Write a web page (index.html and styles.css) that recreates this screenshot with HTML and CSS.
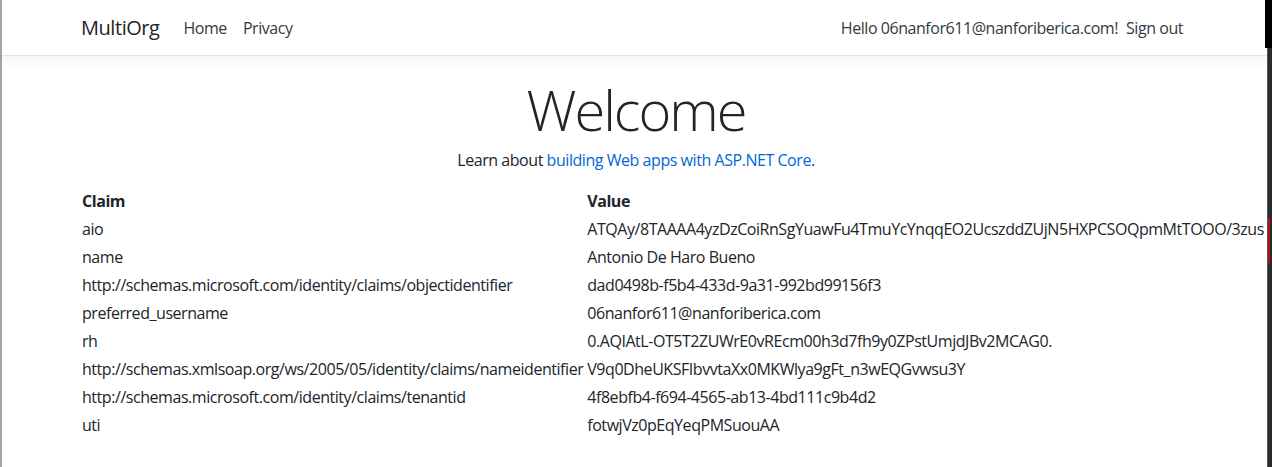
FILE: index.html
```html
<!DOCTYPE html>
<html lang="en">
<head>
<meta charset="utf-8">
<title>Home Page - MultiOrg</title>
<link rel="stylesheet" href="styles.css">
</head>
<body>
<header class="navbar">
  <div class="container nav-inner">
    <div class="nav-left">
      <a class="brand" href="#">MultiOrg</a>
      <a class="nav-link" href="#">Home</a>
      <a class="nav-link" href="#">Privacy</a>
    </div>
    <div class="nav-right">
      <span class="nav-text">Hello 06nanfor611@nanforiberica.com!</span>
      <a class="nav-link" href="#">Sign out</a>
    </div>
  </div>
</header>
<main class="container main">
  <div class="hero">
    <h1 class="display">Welcome</h1>
    <p class="lead-p">Learn about <a class="link" href="#">building Web apps with ASP.NET Core</a>.</p>
  </div>
  <table class="claims">
    <thead>
      <tr><th>Claim</th><th>Value</th></tr>
    </thead>
    <tbody>
      <tr><td>aio</td><td>ATQAy/8TAAAA4yzDzCoiRnSgYuawFu4TmuYcYnqqEO2UcszddZUjN5HXPCSOQpmMtTOOO/3zus</td></tr>
      <tr><td>name</td><td>Antonio De Haro Bueno</td></tr>
      <tr><td>http://schemas.microsoft.com/identity/claims/objectidentifier</td><td>dad0498b-f5b4-433d-9a31-992bd99156f3</td></tr>
      <tr><td>preferred_username</td><td>06nanfor611@nanforiberica.com</td></tr>
      <tr><td>rh</td><td>0.AQIAtL-OT5T2ZUWrE0vREcm00h3d7fh9y0ZPstUmjdJBv2MCAG0.</td></tr>
      <tr><td>http://schemas.xmlsoap.org/ws/2005/05/identity/claims/nameidentifier</td><td>V9q0DheUKSFIbvvtaXx0MKWlya9gFt_n3wEQGvwsu3Y</td></tr>
      <tr><td>http://schemas.microsoft.com/identity/claims/tenantid</td><td>4f8ebfb4-f694-4565-ab13-4bd111c9b4d2</td></tr>
      <tr><td>uti</td><td>fotwjVz0pEqYeqPMSuouAA</td></tr>
    </tbody>
  </table>
</main>
<div class="frame-left"></div>
<div class="frame-right-top"></div>
<div class="frame-right"><div class="frame-red"></div></div>
</body>
</html>
```
FILE: styles.css
```css
html, body {
  margin: 0;
  padding: 0;
}
body {
  font-family: "Open Sans", "Noto Sans", sans-serif;
  font-size: 16px;
  line-height: 1.5;
  letter-spacing: -0.45px;
  color: #212529;
  background: #fff;
  overflow: hidden;
  height: 467px;
}
.container {
  max-width: 1140px;
  margin: 0 auto;
  padding: 0 15px;
  box-sizing: border-box;
}
.navbar {
  padding: 8px 0 7px;
  border-bottom: 1px solid #e5e5e5;
  box-shadow: 0 4px 12px rgba(0,0,0,.05);
  background: #fff;
}
.nav-inner {
  display: flex;
  justify-content: space-between;
  align-items: center;
}
.nav-left, .nav-right {
  display: flex;
  align-items: center;
}
.brand {
  font-size: 20px;
  line-height: 30px;
  padding: 5px 0;
  margin-right: 16px;
  color: #212529;
  text-decoration: none;
}
.nav-link {
  padding: 8px;
  color: #343a40;
  text-decoration: none;
}
.nav-text {
  color: #343a40;
  padding: 8px 0;
}
.main {
  padding-top: 18px;
}
.hero {
  text-align: center;
}
.display {
  font-size: 56px;
  font-weight: 300;
  line-height: 1.2;
  letter-spacing: -2px;
  margin: 2px 0 5px;
}
.lead-p {
  margin: 0 0 14px;
}
.link {
  color: #0366d6;
  text-decoration: none;
}
.claims {
  border-collapse: separate;
  border-spacing: 2px;
  white-space: nowrap;
  margin-left: -2px;
}
.claims th, .claims td {
  padding: 1px;
  text-align: left;
}
.claims th {
  font-weight: 700;
}
.frame-left {
  position: fixed;
  left: 0;
  top: 0;
  width: 2px;
  height: 100%;
  background: #a3a3a3;
}
.frame-right-top {
  position: fixed;
  left: 1265px;
  top: 0;
  width: 7px;
  height: 48px;
  background: #000;
}
.frame-right {
  position: fixed;
  left: 1267px;
  top: 48px;
  width: 5px;
  bottom: 0;
  background: #2a2a2a;
  border-left: 1px solid #555;
}
.frame-red {
  position: absolute;
  left: 0;
  top: 170px;
  width: 2px;
  height: 45px;
  background: #b01515;
}
```
